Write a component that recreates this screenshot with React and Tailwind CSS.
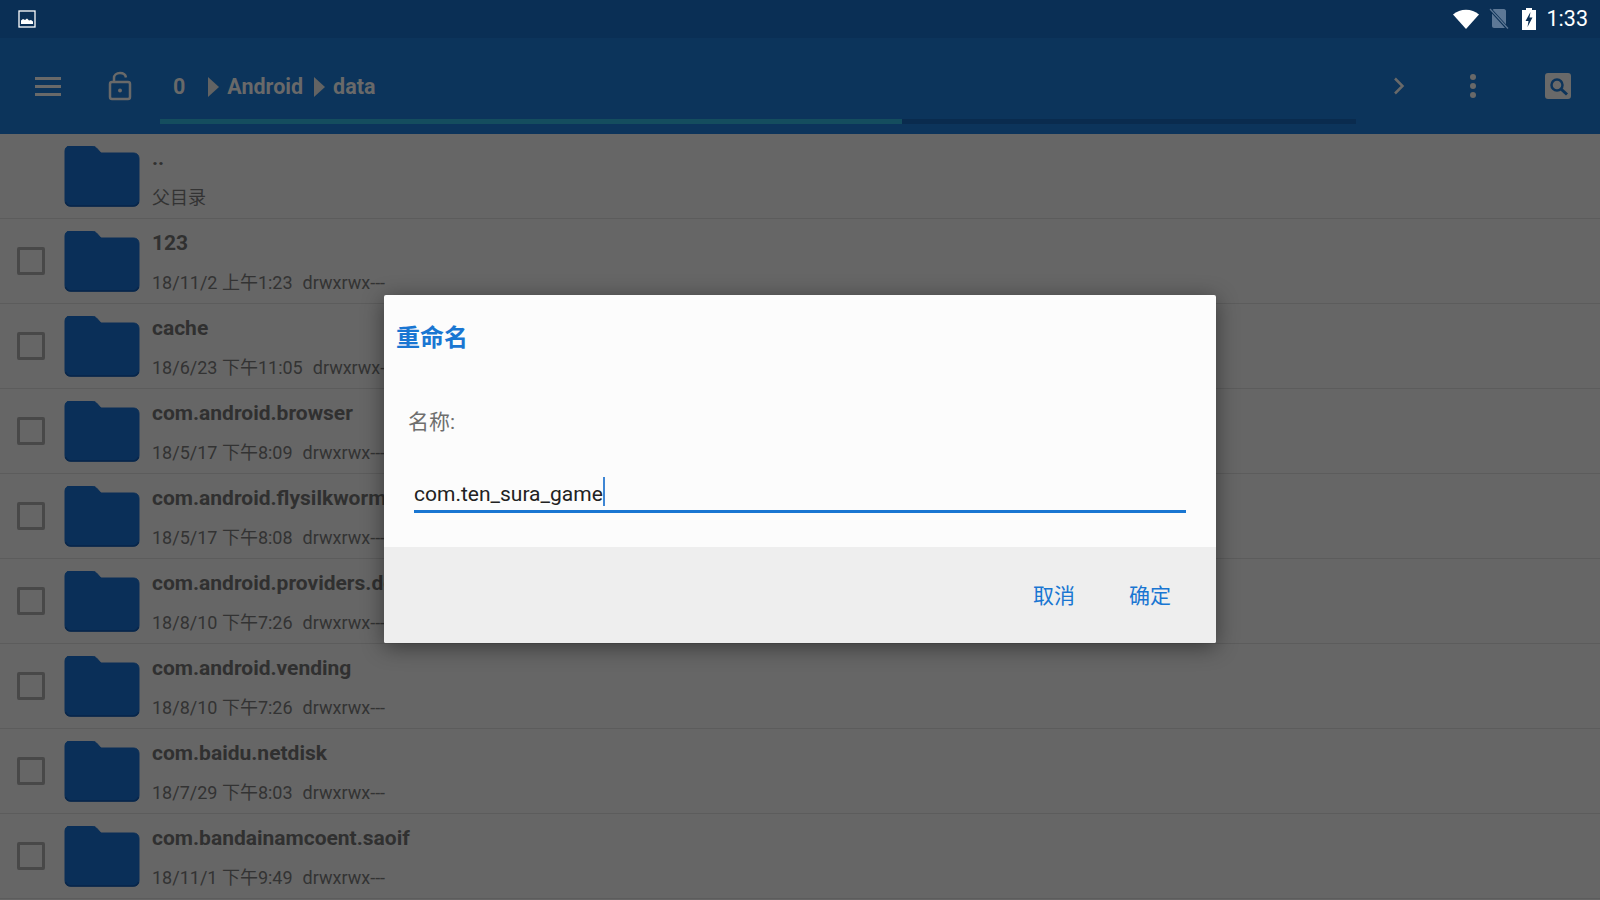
import React from 'react'

const FONT = "font-['Roboto','Noto_Sans_CJK_SC',sans-serif]"

const ROWS = [
  { name: '..', meta: '父目录', parent: true },
  { name: '123', meta: '18/11/2 上午1:23', perm: 'drwxrwx---' },
  { name: 'cache', meta: '18/6/23 下午11:05', perm: 'drwxrwx---' },
  { name: 'com.android.browser', meta: '18/5/17 下午8:09', perm: 'drwxrwx---' },
  { name: 'com.android.flysilkworm', meta: '18/5/17 下午8:08', perm: 'drwxrwx---' },
  { name: 'com.android.providers.downloads', meta: '18/8/10 下午7:26', perm: 'drwxrwx---' },
  { name: 'com.android.vending', meta: '18/8/10 下午7:26', perm: 'drwxrwx---' },
  { name: 'com.baidu.netdisk', meta: '18/7/29 下午8:03', perm: 'drwxrwx---' },
  { name: 'com.bandainamcoent.saoif', meta: '18/11/1 下午9:49', perm: 'drwxrwx---' },
]

const FolderIcon = () => (
  <svg width="76" height="61" viewBox="0 0 76 61" className="shrink-0">
    <path
      d="M6 0H28C30 0 31 .8 32.500 2L37 7H69C73 7 75 9 75 13V54C75 58 73 60 69 60H7C3 60 1 58 1 54V5C1 2 3 0 6 0Z"
      fill="#0a2f58"
      stroke="#0a2f58"
    />
    <path d="M1.500 56C2.500 59 4 60 7 60H69C72 60 73.500 59 74.500 56" fill="none" stroke="#08264a" strokeWidth="1.500" />
  </svg>
)

const Row = ({ row }) => (
  <div className="h-[85px] shrink-0 flex border-b border-[#5c5c5c]">
    <div className="w-[64px] shrink-0 flex items-center justify-center">
      {!row.parent && <div className="w-[28px] h-[28px] ml-[-3px] mt-[-1px] rounded-[2px] border-[3px] border-[#484848]" />}
    </div>
    <div className="pt-[12px]">
      <FolderIcon />
    </div>
    <div className="ml-[12px] min-w-0 flex flex-col">
      <div className="h-[52px] pt-[9px] text-[21px] leading-[30px] font-bold text-[#303030] whitespace-nowrap">{row.name}</div>
      <div className="text-[18px] leading-[24px] text-[#333] whitespace-nowrap">
        {row.meta}
        {row.perm && <span className="ml-[10px]">{row.perm}</span>}
      </div>
    </div>
  </div>
)

const Toolbar = () => (
  <div className="relative h-[96px] shrink-0 bg-[#0c345b] flex items-center">
    <div className="w-[40px] ml-[35px] flex flex-col gap-[5px]">
      <div className="w-[26px] h-[3px] bg-[#696969]" />
      <div className="w-[26px] h-[3px] bg-[#696969]" />
      <div className="w-[26px] h-[3px] bg-[#696969]" />
    </div>
    <svg width="24" height="30" viewBox="0 0 24 30" className="ml-[33px]" fill="none" stroke="#696969" strokeWidth="2.500">
      <rect x="2" y="11" width="20" height="17" rx="2" />
      <path d="M6 11V7C6 4 8.500 2 12 2C15.500 2 17.500 3.500 18 6.500" />
      <circle cx="12" cy="19.500" r="2" fill="#696969" stroke="none" />
    </svg>
    <div className="ml-[41px] mt-[2px] text-[21.500px] font-bold text-[#696969] flex items-center">
      <span>0</span>
      <svg width="11" height="20" viewBox="0 0 11 20" className="ml-[23px]"><path d="M0 0L11 10L0 20Z" fill="#636363" /></svg>
      <span className="ml-[8px]">Android</span>
      <svg width="11" height="20" viewBox="0 0 11 20" className="ml-[11px]"><path d="M0 0L11 10L0 20Z" fill="#636363" /></svg>
      <span className="ml-[8px]">data</span>
    </div>
    <div className="flex-1" />
    <svg width="12" height="18" viewBox="0 0 12 18" fill="none" stroke="#696969" strokeWidth="2.500">
      <path d="M2 1.500L9.500 9L2 16.500" />
    </svg>
    <div className="ml-[65px] mr-[1px] flex flex-col gap-[3px]">
      <div className="w-[6px] h-[6px] rounded-full bg-[#696969]" />
      <div className="w-[6px] h-[6px] rounded-full bg-[#696969]" />
      <div className="w-[6px] h-[6px] rounded-full bg-[#696969]" />
    </div>
    <svg width="26" height="26" viewBox="0 0 26 26" className="ml-[68px] mr-[29px]">
      <rect width="26" height="26" rx="3" fill="#696969" />
      <circle cx="12" cy="12" r="5.500" fill="none" stroke="#0c345b" strokeWidth="2.500" />
      <path d="M16 16L22 21.500" stroke="#0c345b" strokeWidth="3" />
    </svg>
    <div className="absolute left-[160px] top-[81px] w-[1196px] h-[5px] bg-[#0a2b4e]">
      <div className="w-[742px] h-full bg-[#144d5e]" />
    </div>
  </div>
)

const StatusBar = () => (
  <div className="h-[38px] shrink-0 bg-[#0a2f55] flex items-center text-white">
    <svg width="18" height="18" viewBox="0 0 18 18" className="ml-[18px]">
      <rect x="1" y="1" width="16" height="16" fill="#0a2f55" stroke="#fff" strokeWidth="1.300" />
      <path d="M3 14V10.500L5 9L7 10L9 8.500L11 10.500L13 10L15 11.500V14Z" fill="#fff" />
    </svg>
    <div className="flex-1" />
    <svg width="26" height="20" viewBox="0 0 26 20">
      <path d="M0 5.500C7 -1 19 -1 26 5.500L13 20Z" fill="#fff" />
    </svg>
    <svg width="20" height="22" viewBox="0 0 20 22" className="ml-[10px]">
      <path d="M3 3C3 2 4 1 5 1H15C16 1 17 2 17 3V18C17 19 16 20 15 20H5C4 20 3 19 3 18Z" fill="#5d7896" />
      <path d="M1 1L19 21" stroke="#0a2f55" strokeWidth="3" />
      <path d="M1 1L19 20.500" stroke="#5d7896" strokeWidth="1.200" />
    </svg>
    <svg width="14" height="22" viewBox="0 0 14 22" className="ml-[13px]">
      <path d="M0 2H4V0H10V2H14V22H0Z" fill="#fff" />
      <path d="M8.500 4L3.500 13H6.500L5.500 19L10.500 9.500H7.500Z" fill="#0a2f55" />
    </svg>
    <span className="ml-[11px] mr-[12px] text-[21.500px] leading-[24px]">1:33</span>
  </div>
)

const Dialog = () => (
  <div className="absolute left-0 right-0 top-[38px] bottom-0 flex items-center justify-center">
    <div className="w-[832px] h-[348px] flex flex-col rounded-[2px] overflow-hidden bg-[#fcfcfc] shadow-[0_4px_22px_rgba(0,0,0,0.45)]">
      <div className="h-[252px] shrink-0 flex flex-col">
        <div className="mt-[28px] ml-[12px] text-[24px] leading-[30px] font-bold text-[#1976d2]">重命名</div>
        <div className="mt-[55px] ml-[24px] text-[21px] leading-[28px] text-[#6e6e6e]">名称:</div>
        <div className="mt-[39px] mx-[30px] h-[38px] border-b-[3px] border-[#1976d2] flex items-start">
          <span className="pt-[4px] text-[21px] leading-[30px] text-[#222]">com.ten_sura_game</span>
          <span className="mt-[2px] w-[2px] h-[29px] bg-[#3e86d4]" />
        </div>
      </div>
      <div className="flex-1 bg-[#eee] flex items-center justify-end pr-[45px] pt-[3px] text-[21px] text-[#1976d2]">
        <span>取消</span>
        <span className="ml-[54px]">确定</span>
      </div>
    </div>
  </div>
)

export default function App() {
  return (
    <div className={`relative w-[1600px] h-[900px] overflow-hidden flex flex-col bg-[#666] ${FONT}`}>
      <StatusBar />
      <Toolbar />
      <div className="flex-1 min-h-0 flex flex-col">
        {ROWS.map((row) => (
          <Row key={row.name} row={row} />
        ))}
      </div>
      <Dialog />
    </div>
  )
}
